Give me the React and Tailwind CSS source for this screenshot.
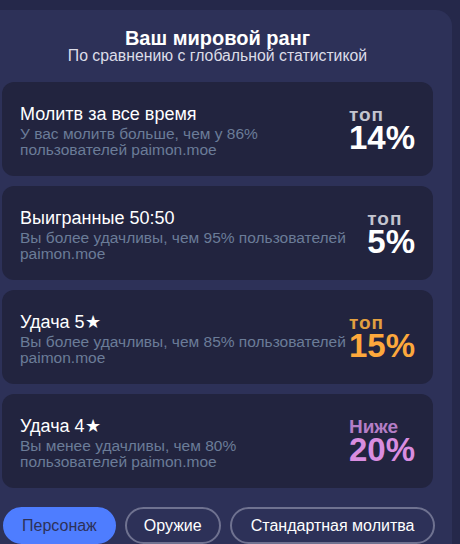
import React from "react";

const stats = [
  {
    title: "Молитв за все время",
    lines: ["У вас молитв больше, чем у 86%", "пользователей paimon.moe"],
    label: "топ",
    value: "14%",
    labelColor: "text-[#c3c4cf]",
    valueColor: "text-white",
  },
  {
    title: "Выигранные 50:50",
    lines: ["Вы более удачливы, чем 95% пользователей", "paimon.moe"],
    label: "топ",
    value: "5%",
    labelColor: "text-[#c3c4cf]",
    valueColor: "text-white",
  },
  {
    title: "Удача 5★",
    lines: ["Вы более удачливы, чем 85% пользователей", "paimon.moe"],
    label: "топ",
    value: "15%",
    labelColor: "text-[#e2a040]",
    valueColor: "text-[#fda83c]",
  },
  {
    title: "Удача 4★",
    lines: ["Вы менее удачливы, чем 80%", "пользователей paimon.moe"],
    label: "Ниже",
    value: "20%",
    labelColor: "text-[#b47ec6]",
    valueColor: "text-[#d98de0]",
  },
];

function StatCard({ stat }) {
  const wideLabel = stat.label === "топ" ? "tracking-[1px]" : "";
  return (
    <div className="h-[94px] bg-[#22243f] rounded-xl flex items-center pl-[18px] pr-[18px]">
      <div className="flex flex-col mt-[3px]">
        <div className="text-white text-[18px] leading-[22px]">{stat.title}</div>
        <div className="text-[#6b7c98] text-[15.5px] leading-[16px] mt-[1px] whitespace-nowrap">
          {stat.lines[0]}
          <br />
          {stat.lines[1]}
        </div>
      </div>
      <div className="ml-auto flex flex-col items-start">
        <span className={`font-bold text-[19px] leading-[17px] ${wideLabel} ${stat.labelColor}`}>{stat.label}</span>
        <span className={`font-bold text-[33px] leading-[30px] ${stat.valueColor}`}>{stat.value}</span>
      </div>
    </div>
  );
}

export default function App() {
  return (
    <div className="h-[544px] w-[460px] bg-[#25284a] pt-[10px] overflow-hidden font-['Liberation_Sans',Arial,sans-serif]">
      <div className="w-[452px] h-full bg-[#2d3158] rounded-tr-2xl pl-[2px] pr-[19px]">
        <div className="flex flex-col items-center pt-[18px] pb-[18px]">
          <h1 className="text-white font-bold text-[20px] leading-[20px]">Ваш мировой ранг</h1>
          <p className="text-[#dcdde8] text-[15.8px] leading-[16px]">По сравнению с глобальной статистикой</p>
        </div>
        <div className="flex flex-col gap-[10px]">
          {stats.map((s) => (
            <StatCard key={s.title} stat={s} />
          ))}
        </div>
        <div className="flex gap-[9px] mt-[19px] pl-[1px]">
          <button className="h-[37px] px-[17px] rounded-full bg-[#4e7dff] border-2 border-[#4e7dff] text-[#2d3158] text-[16px] whitespace-nowrap">
            Персонаж
          </button>
          <button className="h-[37px] px-[17px] rounded-full border-2 border-[#6f7290] text-white text-[16px] whitespace-nowrap">
            Оружие
          </button>
          <button className="h-[37px] px-[19px] rounded-full border-2 border-[#6f7290] text-white text-[16px] whitespace-nowrap">
            Стандартная молитва
          </button>
        </div>
      </div>
    </div>
  );
}
